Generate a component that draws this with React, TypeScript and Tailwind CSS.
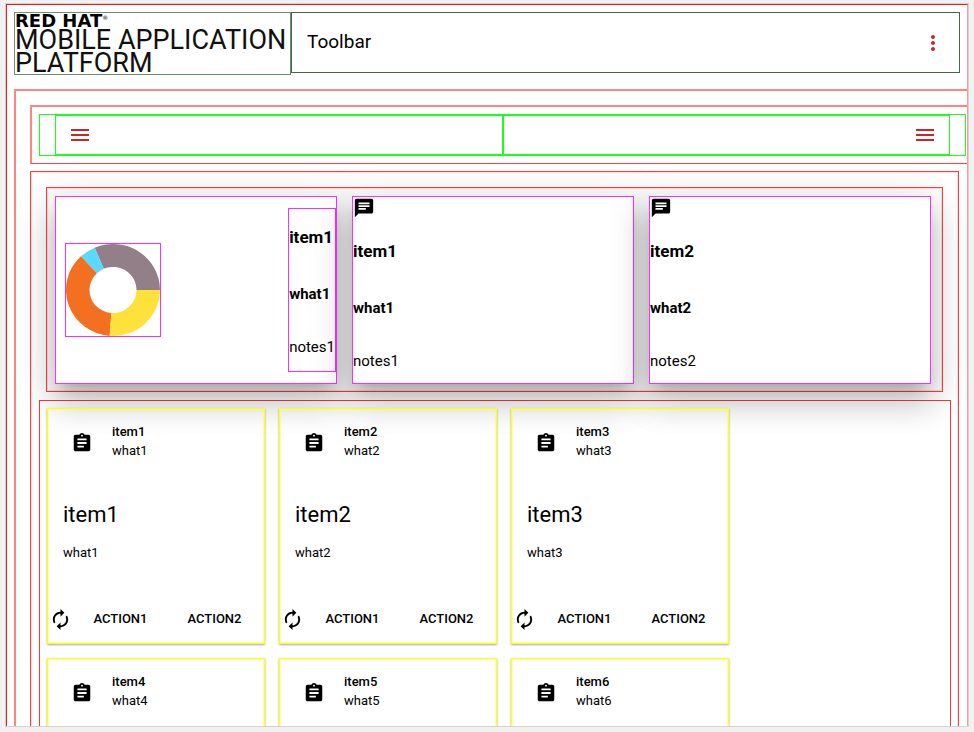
import { MdAssignment, MdAutorenew, MdChat, MdMenu, MdMoreVert } from "react-icons/md";

const messages = [
  { title: "item1", what: "what1", notes: "notes1" },
  { title: "item2", what: "what2", notes: "notes2" },
];

const items = [1, 2, 3, 4, 5, 6].map((n) => ({ title: `item${n}`, what: `what${n}` }));

const slices = [
  { from: 0, to: 113, color: "#937f87" },
  { from: 113, to: 133, color: "#5ad8ff" },
  { from: 133, to: 266, color: "#f37021" },
  { from: 266, to: 360, color: "#ffe13c" },
];

function slicePath(from: number, to: number) {
  const point = (radius: number, degrees: number) => {
    const angle = (degrees * Math.PI) / 180;
    return `${50 + radius * Math.cos(angle)} ${50 - radius * Math.sin(angle)}`;
  };
  return `M${point(50, from)}A50 50 0 0 0 ${point(50, to)}L${point(25, to)}A25 25 0 0 1 ${point(25, from)}Z`;
}

function Donut() {
  return (
    <svg viewBox="0 0 100 100" preserveAspectRatio="none" className="h-full w-full" role="img" aria-label="Chart">
      {slices.map((s) => (
        <path key={s.color} d={slicePath(s.from, s.to)} fill={s.color} />
      ))}
    </svg>
  );
}

function Logo() {
  return (
    <div className="h-[63px] w-[277px] shrink-0 whitespace-nowrap border border-[#6f8f72] text-[#111]">
      <div className="flex h-4 items-center font-['DejaVu_Sans',sans-serif] text-[18px] leading-4 font-bold text-black">
        RED HAT<sup className="text-[6px] font-normal">®</sup>
      </div>
      <div className="text-[27px] leading-[23px]">MOBILE APPLICATION</div>
      <div className="text-[27px] leading-[23px]">PLATFORM</div>
    </div>
  );
}

function Notes({ title, what, notes }: { title: string; what: string; notes: string }) {
  return (
    <>
      <h3 className="text-[17px] leading-5 font-bold">{title}</h3>
      <h4 className="mt-[38px] text-[15px] leading-[18px] font-bold">{what}</h4>
      <p className="mt-[35px] text-[15px] leading-[18px]">{notes}</p>
    </>
  );
}

const whiteframe =
  "h-[188px] border border-[#ff2cff] bg-white shadow-[0_10px_14px_-7px_rgba(0,0,0,0.2),0_20px_30px_2px_rgba(0,0,0,0.14),0_8px_38px_6px_rgba(0,0,0,0.12)]";

function ItemCard({ title, what }: { title: string; what: string }) {
  return (
    <article className="h-[236px] w-[218px] border border-[#ffff10] shadow-[inset_0_0_0_1px_rgba(255,255,60,0.5),0_1px_2px_rgba(0,0,0,0.35)]">
      <header className="flex items-start pt-[13px] pl-[23px]">
        <MdAssignment size={22} className="mt-[10px]" />
        <div className="ml-[19px] text-[13px] leading-[19px]">
          <div className="font-medium">{title}</div>
          <div>{what}</div>
        </div>
      </header>
      <div className="px-[15px] pt-[41px]">
        <h2 className="text-[22px] leading-7">{title}</h2>
        <p className="mt-[14px] text-[13px] leading-5">{what}</p>
      </div>
      <div className="mt-[38px] flex h-9 items-center pl-px text-[13px] font-medium">
        <button type="button" aria-label="Refresh">
          <MdAutorenew size={23} />
        </button>
        <button type="button" className="ml-2 w-[81px]">ACTION1</button>
        <button type="button" className="ml-[13px] w-[81px]">ACTION2</button>
      </div>
    </article>
  );
}

export default function App() {
  return (
    <div className="h-screen bg-[#f1f1f1] pt-[3px] pr-[5px] pb-[5px] pl-[5px] font-['Roboto',sans-serif] text-black">
      <div className="h-full overflow-hidden border border-[#d2d2d2] bg-white">
        <div className="border-t border-r border-l border-[#ff1414] border-r-[#ff9a9a] pt-[7px] pl-[7px]">
          <header className="mr-[7px] flex items-start">
            <Logo />
            <div className="flex h-[61px] flex-1 items-center justify-between border border-[#44664a] pr-[14px] pl-[15px]">
              <h1 className="text-[19px]">Toolbar</h1>
              <button type="button" aria-label="More" className="text-[#c62828]">
                <MdMoreVert size={24} />
              </button>
            </div>
          </header>

          <main className="mt-[14px] border-t-2 border-l-2 border-[#ff8484] pt-[14px] pl-[14px]">
            <nav className="border-t-2 border-b border-l-2 border-[#ff8484] border-b-[#f44] pt-[7px] pr-px pb-[7px] pl-[7px]">
              <div className="border border-[#1aff1a] pr-[15px] pl-[15px]">
                <div className="flex h-10 text-[#c62828]">
                  <div className="flex flex-1 items-center border border-[#1aff1a] px-3">
                    <button type="button" aria-label="Open left menu">
                      <MdMenu size={24} />
                    </button>
                  </div>
                  <div className="flex flex-1 items-center justify-end border border-[#1aff1a] px-3">
                    <button type="button" aria-label="Open right menu">
                      <MdMenu size={24} />
                    </button>
                  </div>
                </div>
              </div>
            </nav>

            <div className="mt-[7px] mr-2 border border-[#ff4040] pb-2 shadow-[inset_0_0_0_1px_#ffdcdc]">
              <section className="mx-[15px] mt-[15px] grid grid-cols-3 gap-[15px] border border-[#ff4040] pt-2 pr-[11px] pb-[7px] pl-2 shadow-[inset_0_0_0_1px_#ffdcdc]">
                <div className={`${whiteframe} flex items-center justify-between pl-[9px]`}>
                  <div className="h-[94px] w-24 border border-[#ff2cff]">
                    <Donut />
                  </div>
                  <div className="-mt-px h-[164px] border border-[#ff2cff] pt-[18px]">
                    <Notes {...messages[0]} />
                  </div>
                </div>
                {messages.map((m) => (
                  <div key={m.title} className={whiteframe}>
                    <MdChat size={22} className="mb-[22px]" />
                    <Notes {...m} />
                  </div>
                ))}
              </section>

              <section className="mt-2 mr-[7px] ml-2 flex flex-wrap gap-[14px] border border-[#ff3838] pt-[7px] pb-[7px] pl-[7px]">
                {items.map((item) => (
                  <ItemCard key={item.title} {...item} />
                ))}
              </section>
            </div>
          </main>
        </div>
      </div>
    </div>
  );
}
